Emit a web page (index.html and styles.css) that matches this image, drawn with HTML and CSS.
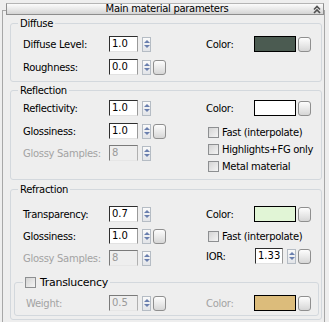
FILE: index.html
```
<!DOCTYPE html>
<html>
<head>
<meta charset="utf-8">
<link rel="stylesheet" href="styles.css">
</head>
<body>
<div class="rollout">
  <div class="titlebar">
    <span class="title">Main material parameters</span>
    <svg class="chev" width="8" height="9" viewBox="0 0 8 9"><path d="M1 4.5 L4 1.5 L7 4.5 M1 8 L4 5 L7 8" fill="none" stroke="#505050" stroke-width="1.6"/></svg>
  </div>

  <div class="group g-diffuse">
    <div class="legend">Diffuse</div>
    <div class="cols">
      <div class="left">
        <div class="row mt6"><span class="lbl">Diffuse Level:</span><span class="num">1.0</span><span class="spin"><i class="up"></i><i class="dn"></i></span></div>
        <div class="row mt7"><span class="lbl">Roughness:</span><span class="num">0.0</span><span class="spin"><i class="up"></i><i class="dn"></i></span><span class="btn"></span></div>
      </div>
      <div class="right">
        <div class="row mt6"><span class="clbl">Color:</span><span class="swatch sw-diffuse"></span><span class="btn"></span></div>
      </div>
    </div>
  </div>

  <div class="group g-reflect">
    <div class="legend">Reflection</div>
    <div class="cols">
      <div class="left">
        <div class="row mt3"><span class="lbl">Reflectivity:</span><span class="num">1.0</span><span class="spin"><i class="up"></i><i class="dn"></i></span></div>
        <div class="row mt7"><span class="lbl">Glossiness:</span><span class="num">1.0</span><span class="spin"><i class="up"></i><i class="dn"></i></span><span class="btn"></span></div>
        <div class="row mt6 dis"><span class="lbl">Glossy Samples:</span><span class="num">8</span><span class="spin"><i class="up"></i><i class="dn"></i></span></div>
      </div>
      <div class="right">
        <div class="row mt3"><span class="clbl">Color:</span><span class="swatch sw-white"></span><span class="btn"></span></div>
        <div class="row mt8"><span class="chk"></span><span class="ctext">Fast (interpolate)</span></div>
        <div class="row mt1"><span class="chk"></span><span class="ctext">Highlights+FG only</span></div>
        <div class="row mt1"><span class="chk"></span><span class="ctext">Metal material</span></div>
      </div>
    </div>
  </div>

  <div class="group g-refract">
    <div class="legend">Refraction</div>
    <div class="cols">
      <div class="left">
        <div class="row mt10"><span class="lbl">Transparency:</span><span class="num">0.7</span><span class="spin"><i class="up"></i><i class="dn"></i></span></div>
        <div class="row mt6"><span class="lbl">Glossiness:</span><span class="num">1.0</span><span class="spin"><i class="up"></i><i class="dn"></i></span><span class="btn"></span></div>
        <div class="row mt6 dis"><span class="lbl">Glossy Samples:</span><span class="num">8</span><span class="spin"><i class="up"></i><i class="dn"></i></span></div>
      </div>
      <div class="right">
        <div class="row mt10"><span class="clbl">Color:</span><span class="swatch sw-green"></span><span class="btn"></span></div>
        <div class="row mt6"><span class="chk"></span><span class="ctext">Fast (interpolate)</span></div>
        <div class="row mt4"><span class="ilbl">IOR:</span><span class="num ior">1.33</span><span class="spin ispin"><i class="up"></i><i class="dn"></i></span><span class="btn"></span></div>
      </div>
    </div>

    <div class="subgroup">
      <div class="legend sublegend"><span class="chk"></span><span class="ctext">Translucency</span></div>
      <div class="cols">
        <div class="left sub-left">
          <div class="row mt6 dis"><span class="lbl wlbl">Weight:</span><span class="num">0.5</span><span class="spin"><i class="up"></i><i class="dn"></i></span><span class="btn"></span></div>
        </div>
        <div class="right">
          <div class="row mt6 dis"><span class="clbl">Color:</span><span class="swatch sw-tan"></span><span class="btn"></span></div>
        </div>
      </div>
    </div>
  </div>
</div>
</body>
</html>
```
FILE: styles.css
```
html, body {
  margin: 0;
  padding: 0;
  background: #eeeeee;
  width: 329px;
  height: 322px;
  overflow: hidden;
  font-family: "DejaVu Sans", "Liberation Sans", sans-serif;
  font-size: 10px;
  letter-spacing: -0.3px;
  color: #000;
}

.rollout {
  margin: 10px 0 0 2px;
  width: 323px;
  height: 320px;
  border: 1px solid #a7a7a7;
  border-bottom: none;
  box-sizing: border-box;
}

.titlebar {
  margin: -8px 0 0 3px;
  width: 318px;
  height: 12px;
  box-sizing: border-box;
  border: 1px solid #8d8d8d;
  border-top-color: #b4b4b4;
  background: linear-gradient(#fbfbfb, #e9e9e9 50%, #d4d4d4);
  display: flex;
  align-items: center;
  justify-content: center;
  position: relative;
  line-height: 10px;
}

.title {
  margin-left: 4px;
}

.chev {
  position: absolute;
  right: 2px;
  top: 1px;
}

.group {
  margin: 8px 0 0 7px;
  width: 312px;
  box-sizing: border-box;
  border: 1px solid #d3d8dd;
  border-radius: 3px;
}

.g-diffuse { padding-bottom: 6px; }
.g-reflect { padding-bottom: 5px; }
.g-refract { margin-top: 9px; padding-bottom: 3px; }

.legend {
  display: flex;
  align-items: center;
  width: fit-content;
  height: 13px;
  line-height: 13px;
  margin: -7px 0 0 7px;
  padding: 0 2px;
  background: #eeeeee;
}

.cols {
  display: flex;
  padding-left: 12px;
}

.left {
  width: 183px;
  display: flex;
  flex-direction: column;
}

.right {
  display: flex;
  flex-direction: column;
}

.row {
  display: flex;
  align-items: center;
  height: 16px;
}

.mt1 { margin-top: 1px; }
.mt3 { margin-top: 3px; }
.mt4 { margin-top: 4px; }
.mt6 { margin-top: 6px; }
.mt7 { margin-top: 7px; }
.mt8 { margin-top: 8px; }
.mt10 { margin-top: 10px; }

.lbl {
  width: 86px;
  white-space: nowrap;
}

.num {
  width: 29px;
  height: 16px;
  box-sizing: border-box;
  border: 1px solid;
  border-color: #2e2e2e #9a9a9a #e2e2e2 #2e2e2e;
  background: #fff;
  line-height: 14px;
  padding-left: 2px;
  letter-spacing: 0;
}

.spin {
  width: 9px;
  height: 15px;
  margin-left: 4px;
  box-sizing: border-box;
  border: 1px solid #b5bcc4;
  background: linear-gradient(#fafafa, #e2e4e8);
  display: flex;
  flex-direction: column;
  align-items: center;
  justify-content: space-around;
  padding: 1px 0;
}

.spin i {
  display: block;
  width: 0;
  height: 0;
  border-left: 3px solid transparent;
  border-right: 3px solid transparent;
}
.spin .up { border-bottom: 3px solid #6a7fae; }
.spin .dn { border-top: 3px solid #6a7fae; }

.btn {
  width: 13px;
  height: 15px;
  margin-left: 2px;
  box-sizing: border-box;
  border: 1px solid #8f8f8f;
  border-radius: 3px;
  background: linear-gradient(#fdfdfd, #e6e6e6 60%, #d6d6d6);
}

.clbl {
  width: 48px;
}

.ilbl {
  width: 49px;
}

.swatch {
  width: 42px;
  height: 16px;
  box-sizing: border-box;
  border: 1px solid #000;
}
.sw-diffuse { background: #4b5b51; }
.sw-white { background: #ffffff; }
.sw-green { background: #e1f5d6; }
.sw-tan { background: #dcbc7b; }

.chk {
  width: 11px;
  height: 11px;
  box-sizing: border-box;
  border: 1px solid #8d8f91;
  background: linear-gradient(135deg, #d4d4d4, #f4f4f4);
  margin-left: 2px;
}

.ctext {
  margin-left: 3px;
  white-space: nowrap;
}

.ior {
  width: 28px;
  padding-left: 2px;
}
.ispin { margin-left: 4px; }

.dis .lbl, .dis .clbl { color: #a3a3a3; }
.dis .num {
  background: #eeeeee;
  color: #9a9a9a;
  border-color: #7a7a7a #b0b0b0 #e6e6e6 #7a7a7a;
}

.subgroup {
  margin: 16px 2px 0 3px;
  border: 1px solid #d3d8dd;
  border-radius: 3px;
  padding-bottom: 4px;
}

.sublegend {
  margin-left: 8px;
  padding: 0 2px 0 0;
}
.sublegend .chk { margin-left: 2px; }
.sublegend .ctext { margin-left: 4px; font-size: 11px; }

.subgroup .cols { padding-left: 11px; }
.sub-left { width: 180px; }
.wlbl { width: 83px; }
```
